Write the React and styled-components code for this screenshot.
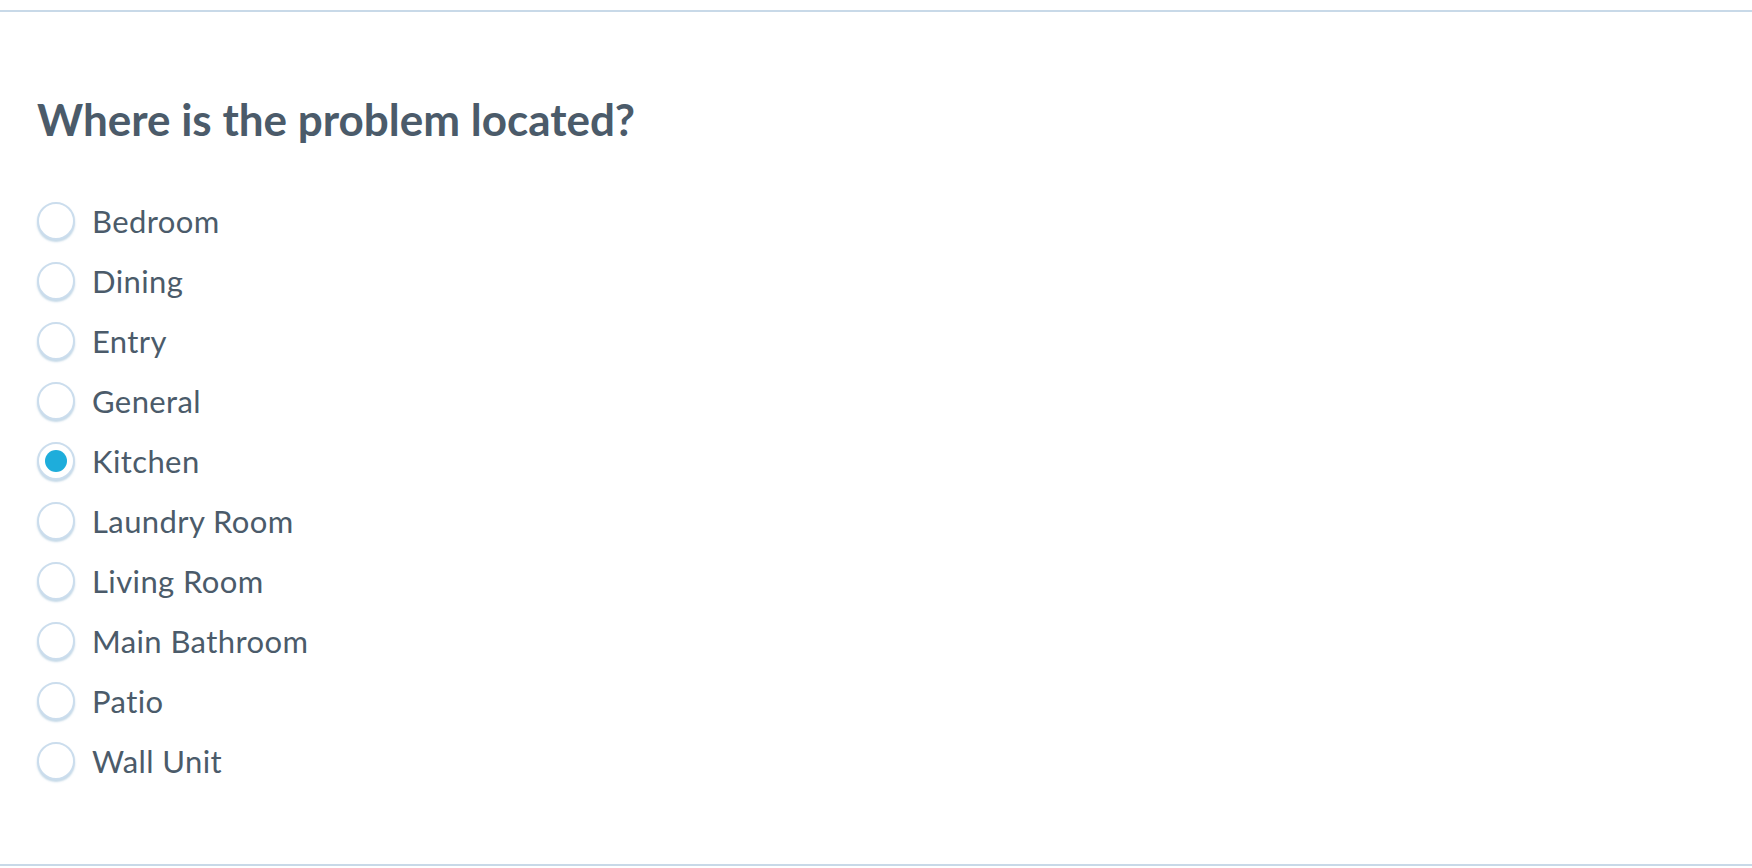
import React, { useState } from "react";
import styled, { createGlobalStyle } from "styled-components";

const GlobalStyle = createGlobalStyle`
  html, body {
    margin: 0;
    padding: 0;
    background: #ffffff;
  }
  body {
    font-family: Lato, "Open Sans", sans-serif;
    color: #4b5b6a;
  }
`;

const locations = [
  "Bedroom",
  "Dining",
  "Entry",
  "General",
  "Kitchen",
  "Laundry Room",
  "Living Room",
  "Main Bathroom",
  "Patio",
  "Wall Unit",
];

const App = () => {
  const [selected, setSelected] = useState("Kitchen");

  return (
    <>
      <GlobalStyle />
      <Section>
        <Question>Where is the problem located?</Question>
        <Options>
          {locations.map((name) => (
            <Option key={name} onClick={() => setSelected(name)}>
              <Radio checked={selected === name} />
              <Label>{name}</Label>
            </Option>
          ))}
        </Options>
      </Section>
    </>
  );
};

export default App;

// CSS styling

const Section = styled.section`
  box-sizing: border-box;
  margin-top: 10px;
  height: 856px;
  border-top: 2px solid #c8d9e8;
  border-bottom: 2px solid #c8d9e8;
  padding: 81px 37px 0;
`;

const Question = styled.h2`
  margin: 0 0 45px;
  font-size: 44px;
  font-weight: 700;
  line-height: 53px;
  color: #4b5b6a;
`;

const Options = styled.div`
  display: flex;
  flex-direction: column;
`;

const Option = styled.label`
  display: flex;
  align-items: center;
  height: 60px;
  gap: 17px;
  cursor: pointer;
`;

const Radio = styled.span`
  box-sizing: border-box;
  position: relative;
  width: 38px;
  height: 38px;
  border-radius: 50%;
  border: 2px solid #cbdded;
  box-shadow: 0 2px 2px rgba(150, 185, 212, 0.55);
  background: #ffffff;
  flex-shrink: 0;

  &::after {
    content: "";
    position: absolute;
    left: 50%;
    top: 50%;
    width: 22px;
    height: 22px;
    margin: -11px 0 0 -11px;
    border-radius: 50%;
    background: #1eaddb;
    display: ${(p) => (p.checked ? "block" : "none")};
  }
`;

const Label = styled.span`
  font-size: 31px;
  letter-spacing: 0.4px;
  line-height: 36px;
  color: #4b5b6a;
`;
